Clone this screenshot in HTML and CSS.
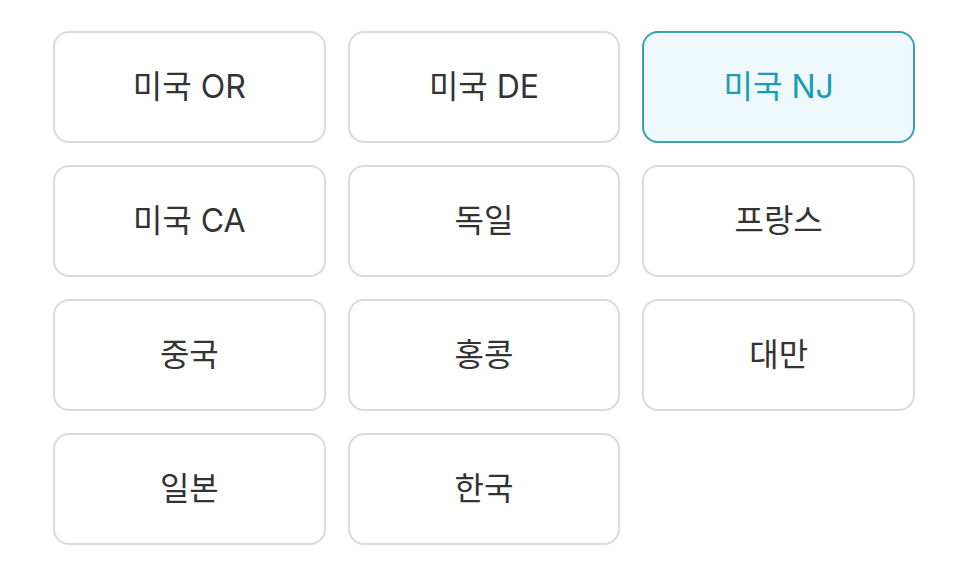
FILE: index.html
```html
<!DOCTYPE html>
<html lang="ko">
<head>
<meta charset="utf-8">
<link rel="stylesheet" href="styles.css">
</head>
<body>
<div class="grid">
  <button class="opt">미국 OR</button>
  <button class="opt">미국 DE</button>
  <button class="opt active">미국 NJ</button>
  <button class="opt">미국 CA</button>
  <button class="opt">독일</button>
  <button class="opt">프랑스</button>
  <button class="opt">중국</button>
  <button class="opt">홍콩</button>
  <button class="opt">대만</button>
  <button class="opt">일본</button>
  <button class="opt">한국</button>
</div>
</body>
</html>
```
FILE: styles.css
```css
html, body {
  margin: 0;
  padding: 0;
  background: #ffffff;
}
.grid {
  width: 862px;
  margin: 31px 0 0 53px;
  display: grid;
  grid-template-columns: repeat(3, 1fr);
  grid-auto-rows: 112px;
  gap: 22px;
}
.opt {
  box-sizing: border-box;
  border: 2px solid #dadada;
  border-radius: 16px;
  background: #ffffff;
  color: #333333;
  font-family: Inter, "Noto Sans CJK KR", sans-serif;
  font-size: 32px;
  line-height: 1;
  padding: 0;
}
.opt.active {
  border-color: #3aa0b4;
  background: #eff9fb;
  color: #1a9bb6;
}
```
